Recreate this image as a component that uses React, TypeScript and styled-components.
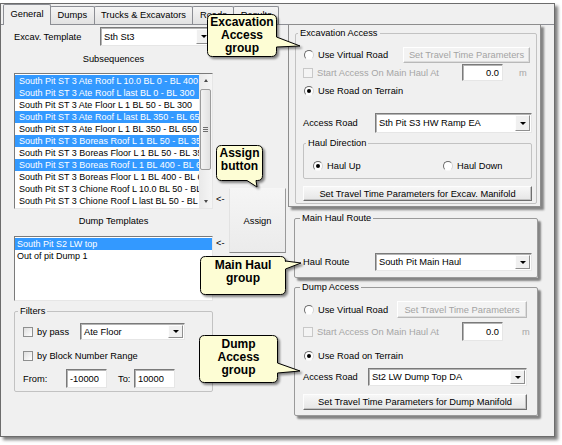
import React from "react";
import styled, { createGlobalStyle } from "styled-components";

const UI_FONT = `"Liberation Sans", Arial, sans-serif`;

const GlobalStyle = createGlobalStyle`
  * { box-sizing: border-box; }
  html, body { margin: 0; padding: 0; background: #ffffff; }
  body {
    font-family: ${UI_FONT};
    font-size: 9.3px;
    color: #000;
  }
`;

const Page = styled.div`
  position: relative;
  width: 562px;
  height: 445px;
  padding-top: 3px;
  overflow: hidden;
`;

const Frame = styled.div`
  width: 555px;
  height: 434px;
  border: 1px solid #6c6c6c;
  background: #f0f0f0;
  box-shadow: 3px 3px 3px rgba(0, 0, 0, 0.5);
  display: flex;
  flex-direction: column;
`;

const TabStrip = styled.div`
  height: 20px;
  flex: none;
  display: flex;
  align-items: flex-end;
  padding-left: 2px;
  position: relative;
  z-index: 1;
`;

const Tab = styled.div<{ $active?: boolean }>`
  height: ${(p) => (p.$active ? 21 : 18)}px;
  margin-bottom: ${(p) => (p.$active ? -1 : 0)}px;
  margin-left: ${(p) => (p.$active ? 0 : -1)}px;
  padding: 0 6.5px ${(p) => (p.$active ? 3 : 2)}px;
  border: 1px solid #8c8e94;
  border-bottom: none;
  border-radius: 2px 2px 0 0;
  background: ${(p) => (p.$active ? "#f0f0f0" : "linear-gradient(#f5f5f5, #e2e2e2)")};
  display: flex;
  align-items: center;
  white-space: nowrap;
  line-height: 12px;
`;

const Panel = styled.div`
  flex: 1;
  border-top: 1px solid #8c8e94;
  display: flex;
  align-items: flex-start;
  padding-left: 13px;
`;

const LeftArea = styled.div`
  width: 274px;
  flex: none;
  display: flex;
  flex-direction: column;
`;

const Row = styled.div<{ $mt?: number; $h?: number; $w?: number }>`
  display: flex;
  align-items: center;
  margin-top: ${(p) => p.$mt ?? 0}px;
  height: ${(p) => p.$h ?? 14}px;
  ${(p) => (p.$w ? `width: ${p.$w}px;` : "")}
  white-space: nowrap;
`;

const Label = styled.span<{ $w?: number; $disabled?: boolean; $pl?: number }>`
  ${(p) => (p.$w ? `width: ${p.$w}px; flex: none;` : "")}
  padding-left: ${(p) => p.$pl ?? 0}px;
  color: ${(p) => (p.$disabled ? "#a6a6a6" : "#000")};
  white-space: nowrap;
`;

const Spacer = styled.span`
  flex: 1;
`;

const Caption = styled.div<{ $mt: number }>`
  margin-top: ${(p) => p.$mt}px;
  height: 12px;
  line-height: 12px;
  text-align: center;
`;

const ComboBox = styled.div<{ $w?: number; $h?: number }>`
  display: flex;
  align-items: stretch;
  ${(p) => (p.$w ? `width: ${p.$w}px; flex: none;` : "flex: 1;")}
  height: ${(p) => p.$h ?? 19}px;
  background: #fff;
  border: 1px solid;
  border-color: #7a7a7a #e6e6e6 #e6e6e6 #7a7a7a;
  box-shadow: inset 1px 1px 0 #b4b4b4;
`;

const ComboText = styled.span`
  flex: 1;
  padding-left: 3px;
  display: flex;
  align-items: center;
  overflow: hidden;
  white-space: nowrap;
`;

const ComboButton = styled.span`
  width: 15px;
  margin: 1px;
  background: #f0f0f0;
  border: 1px solid;
  border-color: #fdfdfd #8f8f8f #8f8f8f #fdfdfd;
  display: flex;
  align-items: center;
  justify-content: center;
  &::before {
    content: "";
    border-left: 3px solid transparent;
    border-right: 3px solid transparent;
    border-top: 3px solid #000;
  }
`;

const TextBox = styled.div<{ $w: number; $h: number; $right?: boolean }>`
  width: ${(p) => p.$w}px;
  height: ${(p) => p.$h}px;
  flex: none;
  background: #fff;
  border: 1px solid;
  border-color: #7a7a7a #e6e6e6 #e6e6e6 #7a7a7a;
  box-shadow: inset 1px 1px 0 #b4b4b4;
  display: flex;
  align-items: center;
  justify-content: ${(p) => (p.$right ? "flex-end" : "flex-start")};
  padding: 0 3px;
`;

const Unit = styled.span<{ $w: number; $pl: number }>`
  width: ${(p) => p.$w}px;
  flex: none;
  padding-left: ${(p) => p.$pl}px;
  color: #a6a6a6;
`;

const Button = styled.button<{ $w?: number; $h: number; $mr?: number; $disabled?: boolean }>`
  font-family: ${UI_FONT};
  font-size: 9.3px;
  margin: 0 ${(p) => p.$mr ?? 0}px 0 0;
  padding: 0;
  ${(p) => (p.$w ? `width: ${p.$w}px; flex: none;` : "width: 100%;")}
  height: ${(p) => p.$h}px;
  color: ${(p) => (p.$disabled ? "#a3a3a3" : "#000")};
  background: ${(p) => (p.$disabled ? "#f3f3f3" : "linear-gradient(#f7f7f7, #e6e6e6)")};
  border: 1px solid;
  border-color: ${(p) =>
    p.$disabled ? "#ffffff #b9b9b9 #b9b9b9 #ffffff" : "#fdfdfd #6f6f6f #6f6f6f #fdfdfd"};
  box-shadow: inset -1px -1px 0 ${(p) => (p.$disabled ? "#dcdcdc" : "#c2c2c2")};
  white-space: nowrap;
`;

const Radio = styled.span<{ $checked?: boolean; $ml?: number }>`
  width: 10px;
  height: 10px;
  flex: none;
  border-radius: 50%;
  border: 1px solid;
  border-color: #6a6a6a #d4d4d4 #f8f8f8 #6a6a6a;
  background: #fff;
  margin: 0 4px 0 ${(p) => p.$ml ?? 1}px;
  display: flex;
  align-items: center;
  justify-content: center;
  &::after {
    content: "";
    width: 4px;
    height: 4px;
    border-radius: 50%;
    background: ${(p) => (p.$checked ? "#000" : "transparent")};
  }
`;

const Check = styled.span<{ $disabled?: boolean }>`
  width: 10px;
  height: 10px;
  flex: none;
  margin-right: 4px;
  border: 1px solid ${(p) => (p.$disabled ? "#c8c8c8" : "#8e8f8f")};
  background: ${(p) => (p.$disabled ? "#f4f4f4" : "linear-gradient(135deg, #dedede, #ffffff)")};
`;

/* list boxes */
const ListBox = styled.div<{ $mt: number; $h: number }>`
  margin-top: ${(p) => p.$mt}px;
  height: ${(p) => p.$h}px;
  width: 199px;
  display: flex;
  background: #fff;
  border: 1px solid;
  border-color: #7a7a7a #e6e6e6 #e6e6e6 #7a7a7a;
`;

const ListItems = styled.div<{ $pad: number }>`
  flex: 1;
  min-width: 0;
  padding-top: 1px;
  overflow: hidden;
  font-size: 9px;
  & > div {
    padding-left: ${(p) => p.$pad}px;
  }
`;

const ListItem = styled.div<{ $selected?: boolean }>`
  height: 12px;
  line-height: 12px;
  white-space: nowrap;
  overflow: hidden;
  background: ${(p) => (p.$selected ? "#3399ff" : "transparent")};
  color: ${(p) => (p.$selected ? "#fff" : "#000")};
`;

const ScrollBar = styled.div`
  width: 13px;
  flex: none;
  display: flex;
  flex-direction: column;
  background: linear-gradient(90deg, #e9e9e9, #f5f5f5);
`;

const ScrollArrow = styled.div<{ $up?: boolean }>`
  height: 13px;
  flex: none;
  display: flex;
  align-items: center;
  justify-content: center;
  &::before {
    content: "";
    border-left: 2.5px solid transparent;
    border-right: 2.5px solid transparent;
    ${(p) => (p.$up ? "border-bottom: 3px solid #4a4a4a;" : "border-top: 3px solid #4a4a4a;")}
  }
`;

const ScrollTrack = styled.div`
  flex: 1;
  padding: 2px 1px 0;
`;

const Thumb = styled.div`
  height: 81px;
  border: 1px solid #9c9c9c;
  border-radius: 2px;
  background: linear-gradient(90deg, #f3f3f3, #e1e1e1);
  display: flex;
  align-items: center;
  justify-content: center;
`;

const Grip = styled.span`
  width: 5px;
  height: 5px;
  border-top: 1px solid #6e6e6e;
  border-bottom: 1px solid #6e6e6e;
  position: relative;
  &::after {
    content: "";
    position: absolute;
    left: 0;
    right: 0;
    top: 1px;
    border-top: 1px solid #6e6e6e;
  }
`;

const ListsRow = styled.div`
  display: flex;
  align-items: flex-start;
`;

const ListsCol = styled.div`
  width: 199px;
  flex: none;
  display: flex;
  flex-direction: column;
`;

const ArrowCol = styled.div`
  width: 16px;
  flex: none;
  display: flex;
  flex-direction: column;
  padding-left: 3px;
`;

const ArrowMark = styled.div<{ $mt: number }>`
  margin-top: ${(p) => p.$mt}px;
  height: 12px;
  line-height: 12px;
`;

const AssignButton = styled(Button)`
  margin-top: 142px;
  border-color: #f6f6f6 #9a9a9a #8a8a8a #e2e2e2;
  box-shadow: none;
  background: linear-gradient(#f5f5f5, #ebebeb);
`;

/* group boxes */
const GroupBox = styled.fieldset<{
  $pl: number;
  $pr: number;
  $pb: number;
  $mt?: number;
  $ml?: number;
  $w?: number;
  $h?: number;
  $raised?: boolean;
}>`
  margin: ${(p) => p.$mt ?? 0}px 0 0 ${(p) => p.$ml ?? 0}px;
  padding: 0 ${(p) => p.$pr}px ${(p) => p.$pb}px ${(p) => p.$pl}px;
  min-width: 0;
  ${(p) => (p.$w ? `width: ${p.$w}px;` : "")}
  ${(p) => (p.$h ? `height: ${p.$h}px;` : "")}
  border: 1px solid ${(p) => (p.$raised ? "#9a9a9a" : "#c2c2c2")};
  border-radius: 2px;
  background: #f0f0f0;
  ${(p) => (p.$raised ? "box-shadow: 3px 3px 2px rgba(0,0,0,0.45);" : "")}
  display: flex;
  flex-direction: column;
`;

const Legend = styled.legend<{ $ml: number }>`
  margin-left: ${(p) => p.$ml}px;
  padding: 0 2px;
  height: 12px;
  line-height: 12px;
  font-size: 9.3px;
`;

const RightArea = styled.div`
  width: 253px;
  flex: none;
  margin-top: -1px;
  display: flex;
  flex-direction: column;
`;

const RaisedCard = styled.div`
  height: 183px;
  border: 1px solid #8d8d8d;
  background: #f0f0f0;
  box-shadow: 3px 3px 2px rgba(0, 0, 0, 0.45);
  padding: 2px 3px 2px 6px;
  display: flex;
  flex-direction: column;
`;

const RadioPair = styled.div<{ $w?: number }>`
  display: flex;
  align-items: center;
  ${(p) => (p.$w ? `width: ${p.$w}px; flex: none;` : "")}
`;

/* callouts */
type Tail = { side: "right" | "bottom"; a: number; b: number; tx: number; ty: number };

const CalloutBox = styled.div<{ $x: number; $y: number; $w: number; $h: number; $pt: number }>`
  position: absolute;
  z-index: 5;
  left: ${(p) => p.$x}px;
  top: ${(p) => p.$y}px;
  width: ${(p) => p.$w}px;
  height: ${(p) => p.$h}px;
  padding-top: ${(p) => p.$pt}px;
  font-family: ${UI_FONT};
  font-weight: bold;
  font-size: 12px;
  line-height: 13px;
  color: #000;
  text-align: center;
`;

const CalloutShape = styled.svg`
  position: absolute;
  left: 0;
  top: 0;
  overflow: visible;
  filter: drop-shadow(2px 2px 1px rgba(0, 0, 0, 0.45));
`;

const CalloutText = styled.div`
  position: relative;
`;

function bubblePath(w: number, h: number, r: number, t: Tail) {
  const L = 0.5;
  const T = 0.5;
  const R = w - 0.5;
  const B = h - 0.5;
  const p: string[] = [`M ${L + r} ${T}`, `H ${R - r}`, `Q ${R} ${T} ${R} ${T + r}`];
  if (t.side === "right") p.push(`V ${t.a}`, `L ${t.tx} ${t.ty}`, `L ${R} ${t.b}`);
  p.push(`V ${B - r}`, `Q ${R} ${B} ${R - r} ${B}`);
  if (t.side === "bottom") p.push(`H ${t.b}`, `L ${t.tx} ${t.ty}`, `L ${t.a} ${B}`);
  p.push(`H ${L + r}`, `Q ${L} ${B} ${L} ${B - r}`, `V ${T + r}`, `Q ${L} ${T} ${L + r} ${T}`, "Z");
  return p.join(" ");
}

function Callout(props: {
  x: number;
  y: number;
  w: number;
  h: number;
  pt: number;
  tail: Tail;
  lines: string[];
}) {
  const { x, y, w, h, pt, tail, lines } = props;
  return (
    <CalloutBox $x={x} $y={y} $w={w} $h={h} $pt={pt}>
      <CalloutShape width={w} height={h}>
        <path d={bubblePath(w, h, 5, tail)} fill="#fdfdd4" stroke="#000" strokeWidth={1} />
      </CalloutShape>
      <CalloutText>
        {lines.map((l) => (
          <div key={l}>{l}</div>
        ))}
      </CalloutText>
    </CalloutBox>
  );
}

const subsequences: [string, boolean][] = [
  ["South Pit ST 3 Ate Roof L 10.0 BL 0 - BL 400", true],
  ["South Pit ST 3 Ate Roof L last BL 0 - BL 300", true],
  ["South Pit ST 3 Ate Floor L 1 BL 50 - BL 300", false],
  ["South Pit ST 3 Ate Roof L last BL 350 - BL 650", true],
  ["South Pit ST 3 Ate Floor L 1 BL 350 - BL 650", false],
  ["South Pit ST 3 Boreas Roof L 1 BL 50 - BL 350", true],
  ["South Pit ST 3 Boreas Floor L 1 BL 50 - BL 350", false],
  ["South Pit ST 3 Boreas Roof L 1 BL 400 - BL 650", true],
  ["South Pit ST 3 Boreas Floor L 1 BL 400 - BL 650", false],
  ["South Pit ST 3 Chione Roof L 10.0 BL 50 - BL 350", false],
  ["South Pit ST 3 Chione Roof L last BL 50 - BL 350", false],
];

const dumps: [string, boolean][] = [
  ["South Pit S2 LW top", true],
  ["Out of pit Dump 1", false],
];

function Combo({ text, w, h }: { text: string; w?: number; h?: number }) {
  return (
    <ComboBox $w={w} $h={h}>
      <ComboText>{text}</ComboText>
      <ComboButton />
    </ComboBox>
  );
}

export default function App() {
  return (
    <Page>
      <GlobalStyle />
      <Frame>
        <TabStrip>
          <Tab $active>General</Tab>
          <Tab>Dumps</Tab>
          <Tab>Trucks &amp; Excavators</Tab>
          <Tab>Roads</Tab>
          <Tab>Results</Tab>
        </TabStrip>
        <Panel>
          <LeftArea>
            <Row $mt={2} $h={19} $w={199}>
              <Label $w={86}>Excav. Template</Label>
              <Combo text="Sth St3" w={113} />
            </Row>
            <ListsRow>
              <ListsCol>
                <Caption $mt={7}>Subsequences</Caption>
                <ListBox $mt={8} $h={136}>
                  <ListItems $pad={4}>
                    {subsequences.map(([t, s]) => (
                      <ListItem key={t} $selected={s}>
                        {t}
                      </ListItem>
                    ))}
                  </ListItems>
                  <ScrollBar>
                    <ScrollArrow $up />
                    <ScrollTrack>
                      <Thumb>
                        <Grip />
                      </Thumb>
                    </ScrollTrack>
                    <ScrollArrow />
                  </ScrollBar>
                </ListBox>
                <Caption $mt={6}>Dump Templates</Caption>
                <ListBox $mt={9} $h={65}>
                  <ListItems $pad={2}>
                    {dumps.map(([t, s]) => (
                      <ListItem key={t} $selected={s}>
                        {t}
                      </ListItem>
                    ))}
                  </ListItems>
                </ListBox>
              </ListsCol>
              <ArrowCol>
                <ArrowMark $mt={147}>&lt;-</ArrowMark>
                <ArrowMark $mt={32}>&lt;-</ArrowMark>
              </ArrowCol>
              <AssignButton $w={57} $h={65}>
                Assign
              </AssignButton>
            </ListsRow>
            <GroupBox $mt={4} $w={199} $h={87} $pl={8} $pr={4} $pb={3}>
              <Legend $ml={-5}>Filters</Legend>
              <Row $mt={6} $h={17}>
                <Check />
                <Label $w={43}>by pass</Label>
                <Combo text="Ate Floor" w={105} h={17} />
              </Row>
              <Row $mt={9} $h={14}>
                <Check />
                <Label>by Block Number Range</Label>
              </Row>
              <Row $mt={6} $h={19}>
                <Label $w={43}>From:</Label>
                <TextBox $w={41} $h={19}>
                  -10000
                </TextBox>
                <Label $w={27} $pl={11}>
                  To:
                </Label>
                <TextBox $w={41} $h={19}>
                  10000
                </TextBox>
              </Row>
            </GroupBox>
          </LeftArea>

          <RightArea>
            <RaisedCard>
              <GroupBox $h={177} $pl={7} $pr={4} $pb={2}>
                <Legend $ml={-5}>Excavation Access</Legend>
                <Row $mt={8} $h={16}>
                  <Radio />
                  <Label>Use Virtual Road</Label>
                  <Spacer />
                  <Button $w={127} $h={16} $mr={2} $disabled>
                    Set Travel Time Parameters
                  </Button>
                </Row>
                <Row $mt={1} $h={17}>
                  <Check $disabled />
                  <Label $disabled>Start Access On Main Haul At</Label>
                  <Spacer />
                  <TextBox $w={41} $h={17} $right>
                    0.0
                  </TextBox>
                  <Unit $w={29} $pl={16}>
                    m
                  </Unit>
                </Row>
                <Row $mt={3} $h={14}>
                  <Radio $checked />
                  <Label>Use Road on Terrain</Label>
                </Row>
                <Row $mt={15} $h={20}>
                  <Label $w={72}>Access Road</Label>
                  <Combo text="Sth Pit S3 HW Ramp EA" h={20} />
                </Row>
                <GroupBox $mt={4} $h={42} $pl={9} $pr={4} $pb={5}>
                  <Legend $ml={-7}>Haul Direction</Legend>
                  <Row $mt={10} $h={14}>
                    <RadioPair $w={130}>
                      <Radio $checked $ml={0} />
                      <Label>Haul Up</Label>
                    </RadioPair>
                    <RadioPair>
                      <Radio $ml={0} />
                      <Label>Haul Down</Label>
                    </RadioPair>
                  </Row>
                </GroupBox>
                <Row $mt={7} $h={15}>
                  <Button $h={15}>Set Travel Time Parameters for Excav. Manifold</Button>
                </Row>
              </GroupBox>
            </RaisedCard>

            <GroupBox $raised $mt={5} $ml={6} $w={244} $h={66} $pl={8} $pr={5} $pb={6}>
              <Legend $ml={-3}>Main Haul Route</Legend>
              <Row $mt={29} $h={18}>
                <Label $w={72}>Haul Route</Label>
                <Combo text="South Pit Main Haul" h={18} />
              </Row>
            </GroupBox>

            <GroupBox $raised $mt={3} $ml={6} $w={244} $h={135} $pl={8} $pr={10} $pb={5}>
              <Legend $ml={-3}>Dump Access</Legend>
              <Row $mt={8} $h={17}>
                <Radio />
                <Label>Use Virtual Road</Label>
                <Spacer />
                <Button $w={130} $h={17} $disabled>
                  Set Travel Time Parameters
                </Button>
              </Row>
              <Row $mt={4} $h={19}>
                <Check $disabled />
                <Label $disabled>Start Access On Main Haul At</Label>
                <Spacer />
                <TextBox $w={41} $h={19} $right>
                  0.0
                </TextBox>
                <Unit $w={24} $pl={19}>
                  m
                </Unit>
              </Row>
              <Row $mt={8} $h={14}>
                <Radio $checked />
                <Label>Use Road on Terrain</Label>
              </Row>
              <Row $mt={5} $h={18}>
                <Label $w={65}>Access Road</Label>
                <Combo text="St2 LW Dump Top DA" h={18} />
              </Row>
              <Row $mt={8} $h={16}>
                <Button $h={16}>Set Travel Time Parameters for Dump Manifold</Button>
              </Row>
            </GroupBox>
          </RightArea>
        </Panel>
      </Frame>

      <Callout
        x={207}
        y={14}
        w={70}
        h={43}
        pt={2}
        tail={{ side: "right", a: 23, b: 33, tx: 93, ty: 32 }}
        lines={["Excavation", "Access", "group"]}
      />
      <Callout
        x={216}
        y={145}
        w={47}
        h={36}
        pt={2}
        tail={{ side: "bottom", a: 31, b: 40, tx: 41, ty: 42 }}
        lines={["Assign", "button"]}
      />
      <Callout
        x={200}
        y={256}
        w={86}
        h={39}
        pt={3}
        tail={{ side: "right", a: 5, b: 13, tx: 101, ty: 7 }}
        lines={["Main Haul", "group"]}
      />
      <Callout
        x={199}
        y={335}
        w={79}
        h={48}
        pt={3}
        tail={{ side: "right", a: 28, b: 38, tx: 101, ty: 36 }}
        lines={["Dump", "Access", "group"]}
      />
    </Page>
  );
}
